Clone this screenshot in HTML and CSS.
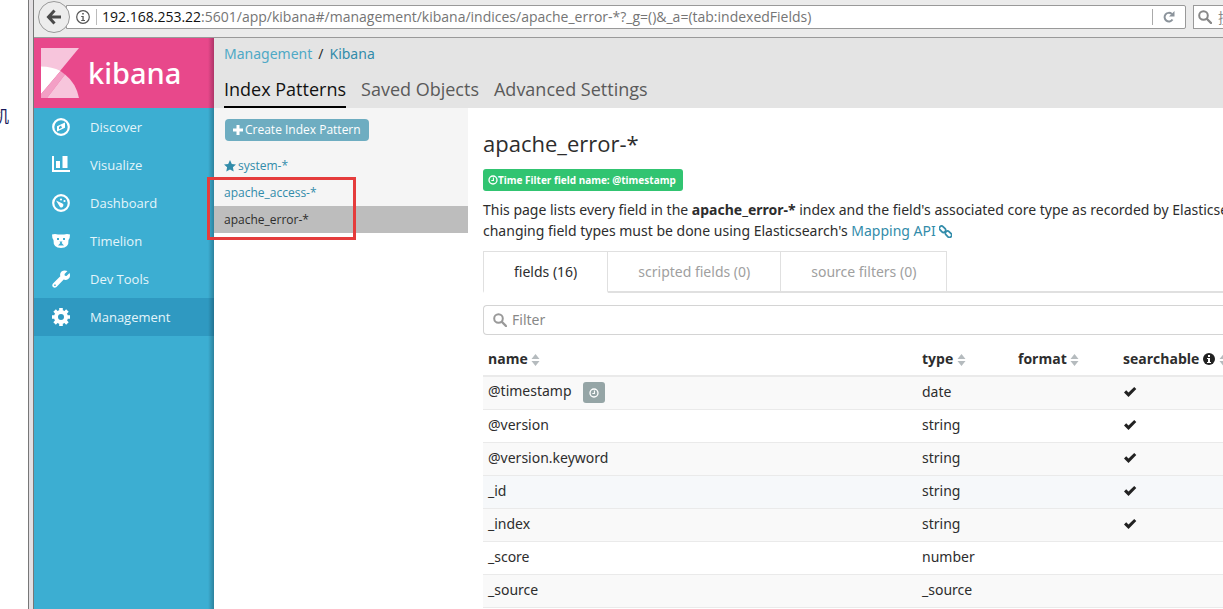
FILE: index.html
```html
<!DOCTYPE html>
<html lang="en">
<head>
<meta charset="utf-8">
<title>Kibana</title>
<link rel="stylesheet" href="styles.css">
</head>
<body>
<svg class="defs" aria-hidden="true">
  <symbol id="sort" viewBox="0 0 8 12"><path d="M0 5 4 0l4 5zM0 7h8l-4 5z"/></symbol>
  <symbol id="check" viewBox="0 0 14 12"><path d="M1 6.500 3.200 4.300 5.500 6.500 11.200 1 13.300 3.100 5.500 11z"/></symbol>
  <symbol id="search" viewBox="0 0 14 14"><circle cx="5.500" cy="5.500" r="4.300" fill="none" stroke="currentColor" stroke-width="2"/><path d="m9 9 4 4" stroke="currentColor" stroke-width="2.400" stroke-linecap="round"/></symbol>
  <symbol id="clock" viewBox="0 0 12 12"><circle cx="6" cy="6" r="4.800" fill="none" stroke="currentColor" stroke-width="1.600"/><path d="M6.500 3v3.500H4" fill="none" stroke="currentColor" stroke-width="1.300"/></symbol>
</svg>
<div class="screen">
  <div class="desktop"><span class="desktop-label">机</span></div>
  <div class="frame"></div>
  <div class="browser">
    <div class="toolbar">
      <button class="back" aria-label="Back"><svg width="16" height="16" viewBox="0 0 16 16"><path d="M8.500 1.500 2.500 8l6 6.500M3 8h12" fill="none" stroke="#4a4a4a" stroke-width="3"/></svg></button>
      <div class="address">
        <svg width="14" height="14" viewBox="0 0 14 14"><circle cx="7" cy="7" r="6.300" fill="none" stroke="#555" stroke-width="1.200"/><path d="M6.200 3h1.600v1.600H6.200zM5.200 6h2.500v4H9v1H5.200v-1h1.200V7H5.200z" fill="#555"/></svg>
        <span class="url"><b>192.168.253.22</b>:5601/app/kibana#/management/kibana/indices/apache_error-*?_g=()&amp;_a=(tab:indexedFields)</span>
        <button class="reload" aria-label="Reload"><svg width="12" height="12" viewBox="0 0 12 12"><path d="M9.500 8.500A4.300 4.300 0 1 1 8.800 3" fill="none" stroke="#8b939b" stroke-width="2"/><path d="M11.500 0v5.500H6z" fill="#8b939b"/></svg></button>
      </div>
      <div class="websearch"><svg width="14" height="14"><use href="#search"/></svg><span>搜索</span></div>
    </div>
    <div class="app">
      <nav class="sidebar">
        <div class="brand">
          <svg width="38" height="50" viewBox="0 0 38 50"><path d="M0 0h38L0 46z" fill="#f7c5dc"/><path d="M0 18.500Q11 18.500 19.500 23L0 46z" fill="#fff"/><path d="M19.500 23 24 26.500 6 50H0v-4z" fill="#f39fc5"/><path d="M24 26.500Q35 35 38 50H6z" fill="#f7c5dc"/></svg>
          <span>kibana</span>
        </div>
        <a class="nav-item" href="#"><svg width="18" height="18" viewBox="0 0 18 18"><circle cx="9" cy="9" r="7.800" fill="none" stroke="#fff" stroke-width="2.200"/><path fill-rule="evenodd" d="M13 4.500v5.200L5 13.500V8.300zM9 7.600 7 9v2.200l3-1.500z" fill="#fff"/></svg><span>Discover</span></a>
        <a class="nav-item" href="#"><svg width="18" height="18" viewBox="0 0 18 18"><path d="M0 0h2v14h16v2H0zM4 5h4v7H4zM10.500 0h5v12h-5z" fill="#fff"/></svg><span>Visualize</span></a>
        <a class="nav-item" href="#"><svg width="18" height="18" viewBox="0 0 18 18"><circle cx="9" cy="9" r="7.800" fill="none" stroke="#fff" stroke-width="2.200"/><path d="m4 6.500 6.500 3a2 2 0 1 1-2.500 3.500z" fill="#fff"/><circle cx="9" cy="5.500" r="1.100" fill="#fff"/><circle cx="12.500" cy="7" r="1.100" fill="#fff"/></svg><span>Dashboard</span></a>
        <a class="nav-item" href="#"><svg width="18" height="18" viewBox="0 0 18 18"><path fill-rule="evenodd" d="M0 2.500 3 2q6 1.200 12 0l3 .5q0 4-1.500 5.500Q17 16 9 16T1.500 8Q0 6.500 0 2.500zM5 6v2h2V6zm6 0v2h2V6zM7.500 9.500 8.300 11 6 13.500h6L9.700 11l.8-1.500z" fill="#fff"/></svg><span>Timelion</span></a>
        <a class="nav-item" href="#"><svg width="18" height="18" viewBox="0 0 18 18"><path fill-rule="evenodd" d="M15.500 1 12.500 4l.3 1.700 1.700.3 3-3q1.500 4-1.300 6-2 1.400-4.500.6L4.500 17Q2.500 18.500 1 17T1 13.500L8.300 6.300Q7.500 3.500 9.500 1.600 12-.5 15.500 1zM2.200 14.500v1.500h1.500v-1.500z" fill="#fff"/></svg><span>Dev Tools</span></a>
        <a class="nav-item active" href="#"><svg width="18" height="18" viewBox="0 0 18 18"><circle cx="9" cy="9" r="5" fill="none" stroke="#fff" stroke-width="4"/><path d="M9 0v4M9 14v4M0 9h4M14 9h4M2.600 2.600l2.800 2.800M12.600 12.600l2.800 2.800M2.600 15.400l2.800-2.800M12.600 5.400l2.800-2.800" stroke="#fff" stroke-width="3.600"/></svg><span>Management</span></a>
      </nav>
      <main class="main">
        <header class="header">
          <div class="crumbs"><a href="#">Management</a><span>/</span><a class="current" href="#">Kibana</a></div>
          <nav class="sections"><a class="selected" href="#">Index Patterns</a><a href="#">Saved Objects</a><a href="#">Advanced Settings</a></nav>
        </header>
        <div class="columns">
          <aside class="patterns">
            <button class="create"><svg width="10" height="10" viewBox="0 0 10 10"><path d="M5 0v10M0 5h10" stroke="#fff" stroke-width="3"/></svg>Create Index Pattern</button>
            <a class="pattern" href="#"><svg width="12" height="12" viewBox="0 0 12 12"><path d="m6 0 1.800 3.900 4.200.5-3.100 2.900.8 4.200L6 9.400l-3.700 2.100.8-4.200L0 4.400l4.200-.5z" fill="#328caa"/></svg>system-*</a>
            <div class="marked">
              <a class="pattern" href="#">apache_access-*</a>
              <a class="pattern chosen" href="#">apache_error-*</a>
              <div class="marker"></div>
            </div>
          </aside>
          <section class="details">
            <h1>apache_error-*</h1>
            <span class="label"><svg width="10" height="10"><use href="#clock" width="10" height="10"/></svg>Time Filter field name: @timestamp</span>
            <p>This page lists every field in the <strong>apache_error-*</strong> index and the field's associated core type as recorded by Elasticsearch.<br>changing field types must be done using Elasticsearch's <a href="#">Mapping API <svg width="13" height="13" viewBox="0 0 13 13"><g fill="none" stroke="currentColor" stroke-width="1.800"><rect x="0" y="2" width="7" height="4.400" rx="2" transform="rotate(45 3.500 4.200)"/><rect x="6" y="7" width="7" height="4.400" rx="2" transform="rotate(45 9.500 9.200)"/></g></svg></a></p>
            <div class="tabs"><button class="tab on">fields (16)</button><button class="tab">scripted fields (0)</button><button class="tab">source filters (0)</button></div>
            <label class="filter"><svg width="14" height="14"><use href="#search"/></svg><input type="text" placeholder="Filter" aria-label="Filter"></label>
            <table>
              <colgroup><col><col class="c-type"><col class="c-format"><col class="c-search"></colgroup>
              <thead><tr>
                <th>name <svg width="9" height="12"><use href="#sort"/></svg></th>
                <th>type <svg width="9" height="12"><use href="#sort"/></svg></th>
                <th>format <svg width="9" height="12"><use href="#sort"/></svg></th>
                <th>searchable <svg class="info" width="12" height="12" viewBox="0 0 12 12"><circle cx="6" cy="6" r="6"/><path d="M5 2h2v2H5zM4 5h3v4h1v1H4V9h1V6H4z" fill="#fff"/></svg> <svg width="9" height="12"><use href="#sort"/></svg></th>
              </tr></thead>
              <tbody>
                <tr><td>@timestamp <span class="time"><svg width="10" height="10"><use href="#clock" width="10" height="10"/></svg></span></td><td>date</td><td></td><td><svg width="14" height="12"><use href="#check"/></svg></td></tr>
                <tr><td>@version</td><td>string</td><td></td><td><svg width="14" height="12"><use href="#check"/></svg></td></tr>
                <tr><td>@version.keyword</td><td>string</td><td></td><td><svg width="14" height="12"><use href="#check"/></svg></td></tr>
                <tr class="hover"><td>_id</td><td>string</td><td></td><td><svg width="14" height="12"><use href="#check"/></svg></td></tr>
                <tr><td>_index</td><td>string</td><td></td><td><svg width="14" height="12"><use href="#check"/></svg></td></tr>
                <tr><td>_score</td><td>number</td><td></td><td></td></tr>
                <tr><td>_source</td><td>_source</td><td></td><td></td></tr>
              </tbody>
            </table>
          </section>
        </div>
      </main>
    </div>
  </div>
</div>
</body>
</html>
```
FILE: styles.css
```css
* { box-sizing: border-box; }
body {
  margin: 0;
  font: 14px/20px "Open Sans", "Noto Sans", sans-serif;
  color: #2d2d2d;
  background: #fff;
  overflow-x: hidden;
}
a { color: #328caa; text-decoration: none; }
button { font: inherit; cursor: pointer; }
.defs { position: absolute; width: 0; height: 0; }

.screen { display: flex; min-height: 100vh; overflow: hidden; }
.desktop {
  flex: 0 0 28px;
  padding-top: 105px;
  overflow: hidden;
}
.desktop-label {
  display: flex;
  justify-content: flex-end;
  width: 9px;
  font: 16px/20px "Noto Sans CJK SC", sans-serif;
  color: #1a1a5a;
}
.frame {
  flex: 0 0 6px;
  background: #e3e0e3;
  border-left: 1px solid #777;
  border-right: 1px solid #777;
}
.browser { flex: 1; min-width: 0; display: flex; flex-direction: column; }

.toolbar {
  display: flex;
  align-items: flex-start;
  height: 38px;
  padding-top: 1px;
  background: #ebebeb;
  border-bottom: 1px solid #999;
  overflow: hidden;
}
.back {
  flex: none;
  display: flex;
  align-items: center;
  justify-content: center;
  width: 32px;
  height: 32px;
  margin-left: 4px;
  padding: 0;
  border: 1px solid #999;
  border-radius: 50%;
  background: #ededed;
  z-index: 1;
}
.address {
  flex: 1;
  display: flex;
  align-items: center;
  gap: 6px;
  height: 24px;
  margin: 4px 7px 0 -4px;
  padding-left: 9px;
  background: #fff;
  border: 1px solid #999;
  border-radius: 0 2px 2px 0;
}
.url {
  flex: 1;
  padding-left: 5px;
  border-left: 1px solid #bbb;
  font: 14px/16px "Open Sans", sans-serif;
  color: #757575;
  white-space: nowrap;
}
.url b { font-weight: 400; color: #111; }
.reload {
  display: flex;
  align-items: center;
  height: 16px;
  padding: 0 10px;
  border: 0;
  border-left: 1px solid #aaa;
  background: none;
}
.websearch {
  display: flex;
  flex: 0 0 30px;
  align-items: center;
  gap: 6px;
  height: 24px;
  margin-top: 4px;
  padding-left: 4px;
  overflow: hidden;
  white-space: nowrap;
  color: #888;
  background: #fff;
  border: 1px solid #999;
  border-right: 0;
  font: 14px/20px "Noto Sans CJK SC", sans-serif;
}
.websearch svg { flex: none; }

.app { flex: 1; display: flex; }
.sidebar {
  position: relative;
  flex: 0 0 180px;
  background: #3caed2;
}
.sidebar::after {
  content: "";
  position: absolute;
  inset: 0 0 0 auto;
  width: 6px;
  background: linear-gradient(to right, transparent, rgba(0, 0, 0, .25));
}
.brand {
  display: flex;
  align-items: center;
  gap: 9px;
  height: 70px;
  padding-left: 7px;
  background: #e8488b;
  color: #fff;
  font: 500 29px/40px "Noto Sans", sans-serif;
}
.nav-item {
  display: flex;
  align-items: center;
  gap: 20px;
  height: 38px;
  padding-left: 18px;
  font-size: 13px;
  color: #e4f5fa;
}
.nav-item.active { background: #2f99c1; }

.main { flex: 1; min-width: 0; }
.header {
  display: flex;
  flex-direction: column;
  justify-content: space-between;
  height: 70px;
  padding: 6px 10px 0;
  background: #e4e4e4;
}
.crumbs { display: flex; gap: 6px; font-family: "Noto Sans", sans-serif; }
.crumbs a { color: #4fa9c6; }
.crumbs .current { color: #328caa; }
.sections { display: flex; gap: 15px; font-size: 18px; line-height: 34px; }
.sections a { color: #5a5a5a; }
.sections .selected { color: #111; border-bottom: 2px solid #000; }

.columns { display: flex; align-items: flex-start; }
.patterns {
  flex: 0 0 254px;
  padding-top: 11px;
  background: #f5f5f5;
  font-size: 12px;
}
.create {
  display: flex;
  align-items: center;
  gap: 2px;
  height: 22px;
  margin: 0 0 11px 11px;
  padding: 0 8px;
  border: 0;
  border-radius: 4px;
  background: #6eadc1;
  color: #fff;
}
.pattern {
  display: flex;
  align-items: center;
  gap: 2px;
  height: 27px;
  padding-left: 10px;
}
.pattern.chosen { background: #bdbdbd; color: #2d2d2d; }
.marked { position: relative; }
.marker {
  position: absolute;
  inset: -2px 112px -7px -7px;
  border: 3px solid #e53c3c;
  z-index: 2;
}

.details {
  flex: 1;
  min-width: 0;
  padding: 19px 0 0 15px;
  white-space: nowrap;
  font-family: "Noto Sans", sans-serif;
}
h1 { margin: 0 0 10px; font: 400 22px/32px "Open Sans", sans-serif; }
.label {
  display: flex;
  align-items: center;
  width: max-content;
  height: 22px;
  padding: 0 7px 0 5px;
  border-radius: 3px;
  background: #31c471;
  color: #fff;
  font-size: 10px;
  font-weight: 700;
}
p { margin: 8px 0 10px; line-height: 21px; }
p svg { vertical-align: -2px; }
.tabs { display: flex; border-bottom: 2px solid #e0e0e0; }
.tab {
  height: 42px;
  margin-bottom: -2px;
  padding: 0 30px;
  border: 1px solid #e0e0e0;
  border-width: 1px 1px 2px 0;
  background: #fff;
  color: #a0a0a0;
}
.tab.on { border-left-width: 1px; border-bottom-color: #fff; color: #2d2d2d; }
.filter {
  display: flex;
  align-items: center;
  gap: 5px;
  height: 30px;
  margin: 12px 0 9px;
  padding-left: 9px;
  border: 1px solid #d4d4d4;
  border-right: 0;
  border-radius: 4px 0 0 4px;
  color: #999;
}
.filter input { flex: 1; border: 0; padding: 0; font: inherit; outline: 0; }
.filter input::placeholder { color: #888; }

table { width: 100%; table-layout: fixed; border-collapse: collapse; }
.c-type { width: 96px; }
.c-format, .c-search { width: 105px; }
th, td { height: 33px; padding: 0 5px 1px; text-align: left; }
th { height: 32px; border-bottom: 2px solid #eaeaea; fill: #b5bbbe; font-family: "Open Sans", sans-serif; }
th svg { vertical-align: -2px; }
th .info { fill: #222; vertical-align: -1px; }
td { border-bottom: 1px solid #eaeaea; }
td > svg { vertical-align: -1px; fill: #222; }
tbody tr:nth-child(odd) { background: #f9f9f9; }
tbody tr.hover { background: #f6f8fa; }
.time {
  display: inline-flex;
  align-items: center;
  justify-content: center;
  width: 22px;
  height: 21px;
  margin-left: 8px;
  border-radius: 3px;
  background: #95a5a6;
  color: #fff;
  vertical-align: middle;
}
```
